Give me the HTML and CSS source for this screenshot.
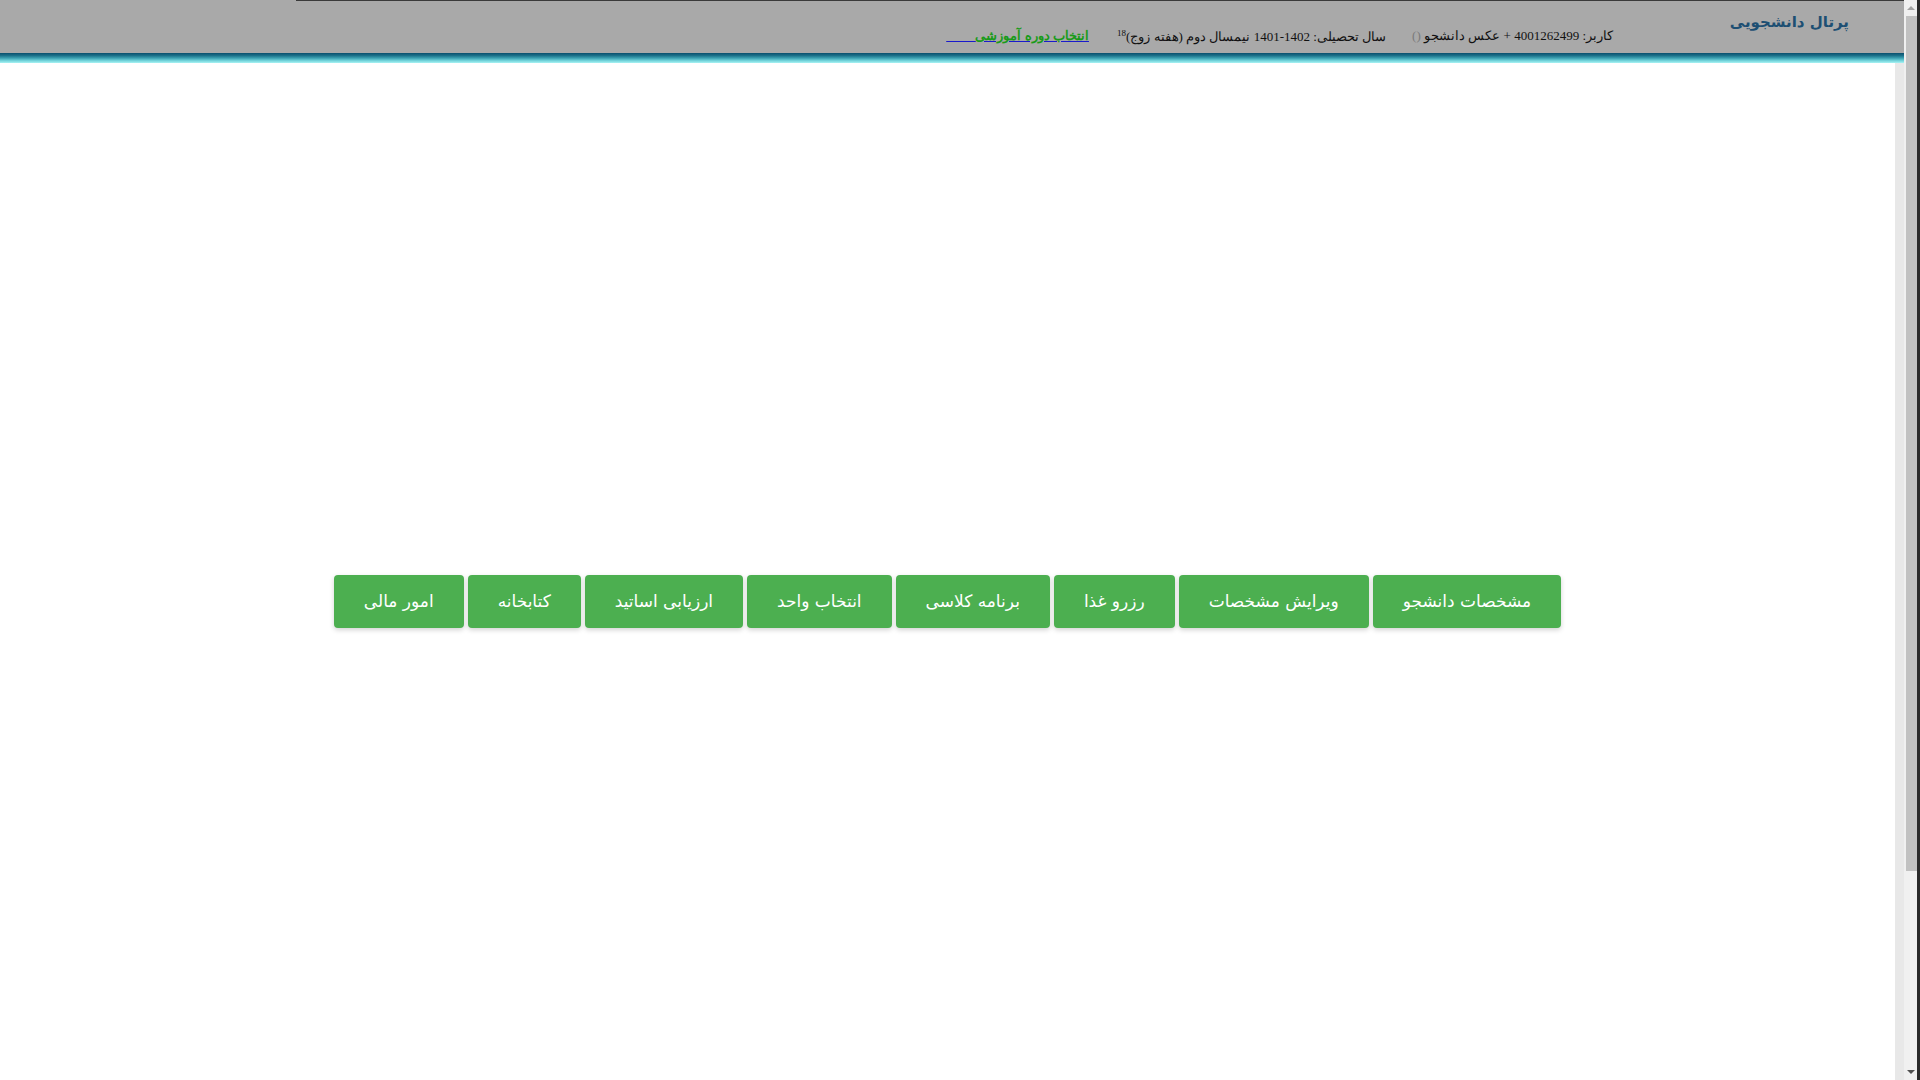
FILE: index.html
```html
<!DOCTYPE html>
<html lang="fa" dir="rtl">
<head>
<meta charset="utf-8">
<title>پرتال دانشجویی</title>
<link rel="stylesheet" href="styles.css">
</head>
<body>
<div class="topline"></div>
<div class="page">
  <header class="header">
    <div class="title">پرتال دانشجویی</div>
    <div class="user">کاربر: 4001262499 + عکس دانشجو <span class="paren">()</span></div>
    <div class="year">سال تحصیلی: 1402-1401 نیمسال دوم (هفته زوج)<sup>18</sup></div>
    <a class="link" href="#">انتخاب دوره آموزشی<span class="pad">&nbsp;&nbsp;&nbsp;&nbsp;&nbsp;&nbsp;&nbsp;&nbsp;&nbsp;</span></a>
  </header>
  <div class="stripe"></div>
  <main class="main">
    <nav class="menu">
      <a class="btn" href="#">مشخصات دانشجو</a>
      <a class="btn" href="#">ویرایش مشخصات</a>
      <a class="btn" href="#">رزرو غذا</a>
      <a class="btn" href="#">برنامه کلاسی</a>
      <a class="btn" href="#">انتخاب واحد</a>
      <a class="btn" href="#">ارزیابی اساتید</a>
      <a class="btn" href="#">کتابخانه</a>
      <a class="btn" href="#">امور مالی</a>
    </nav>
  </main>
</div>
<div class="edge"></div>
<div class="scrollbar">
  <div class="arrow up"></div>
  <div class="thumb"></div>
  <div class="arrow down"></div>
</div>
</body>
</html>
```
FILE: styles.css
```css
html, body {
  margin: 0;
  padding: 0;
  height: 100%;
  overflow: hidden;
  background: #ffffff;
}
body {
  font-family: "Liberation Serif", "DejaVu Serif", serif;
  padding-right: 16px;
  box-sizing: border-box;
}
.page {
  height: 1080px;
  display: flex;
  flex-direction: column;
}
.header {
  height: 53px;
  background: #a9a9a9;
  display: flex;
  flex-direction: row;
  align-items: flex-start;
  padding-right: 55px;
  box-sizing: border-box;
}
.title {
  font-family: "DejaVu Sans", "Noto Sans", sans-serif;
  font-size: 15px;
  font-weight: bold;
  color: #1d4f73;
  padding-top: 13px;
  width: 112px;
  white-space: nowrap;
}
.user {
  margin-right: 124px;
  padding-top: 28px;
  font-size: 13px;
  color: #111;
  white-space: nowrap;
}
.paren {
  color: #7a7a7a;
}
.year {
  margin-right: 26px;
  padding-top: 28px;
  font-size: 13px;
  color: #111;
  white-space: nowrap;
}
.year sup {
  font-size: 9px;
}
.link {
  margin-right: 28px;
  padding-top: 28px;
  font-size: 13px;
  font-weight: bold;
  color: #1a9b1a;
  text-decoration: underline;
  text-decoration-color: #1a1acc;
  white-space: nowrap;
}
.link .pad {
  font-weight: normal;
}
.stripe {
  height: 10px;
  background: linear-gradient(to bottom, #0a4f6e 0%, #1b6f88 25%, #3a9fb0 50%, #6fd0d8 75%, #a8f4f4 100%);
}
.main {
  flex: 1;
  display: flex;
  justify-content: center;
  align-items: flex-start;
  padding-top: 512px;
  padding-right: 9px;
}
.menu {
  display: flex;
  flex-direction: row;
  gap: 4px;
}
.btn {
  display: block;
  background: #4caf50;
  color: #ffffff;
  text-decoration: none;
  font-family: "DejaVu Sans", "Noto Sans", sans-serif;
  font-size: 17px;
  height: 53px;
  line-height: 53px;
  padding: 0 30px;
  border-radius: 4px;
  box-shadow: 0 2px 5px rgba(0, 0, 0, 0.18);
  white-space: nowrap;
}
.topline {
  position: absolute;
  top: 0;
  left: 296px;
  right: 16px;
  height: 1px;
  background: #3a3a3a;
}
.edge {
  position: fixed;
  top: 63px;
  bottom: 0;
  right: 16px;
  width: 9px;
  background: #e8e8e8;
}
.scrollbar {
  position: fixed;
  top: 0;
  right: 0;
  width: 16px;
  height: 1080px;
  background: #f0f0f0;
  border-right: 3px solid #2a2a2a;
  box-sizing: border-box;
}
.thumb {
  position: absolute;
  top: 16px;
  left: 2px;
  width: 11px;
  height: 855px;
  background: #c1c1c1;
}
.arrow {
  position: absolute;
  left: 3px;
  width: 0;
  height: 0;
  border-left: 4px solid transparent;
  border-right: 4px solid transparent;
}
.arrow.up {
  top: 6px;
  border-bottom: 4px solid #a3a3a3;
}
.arrow.down {
  bottom: 6px;
  border-top: 4px solid #505050;
}
```
